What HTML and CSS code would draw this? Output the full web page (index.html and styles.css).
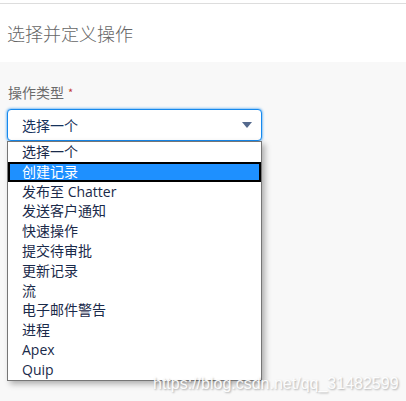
FILE: index.html
```html
<!DOCTYPE html>
<html lang="zh">
<head>
<meta charset="utf-8">
<link rel="stylesheet" href="styles.css">
</head>
<body>
<div class="header">
  <div class="header-inner">选择并定义操作</div>
</div>
<div class="form">
  <div class="label">操作类型<span class="req">*</span></div>
  <div class="select">
    <span class="select-value">选择一个</span>
    <svg class="arrow" width="10" height="6" viewBox="0 0 10 6"><path d="M0 0H10L5 6Z" fill="#54698d"/></svg>
  </div>
  <ul class="listbox">
    <li class="opt">选择一个</li>
    <li class="opt active">创建记录</li>
    <li class="opt">发布至 Chatter</li>
    <li class="opt">发送客户通知</li>
    <li class="opt">快速操作</li>
    <li class="opt">提交待审批</li>
    <li class="opt">更新记录</li>
    <li class="opt">流</li>
    <li class="opt">电子邮件警告</li>
    <li class="opt">进程</li>
    <li class="opt">Apex</li>
    <li class="opt">Quip</li>
  </ul>
</div>
<div class="watermark">https://blog.csdn.net/qq_31482599</div>
</body>
</html>
```
FILE: styles.css
```css
html, body {
  margin: 0;
  padding: 0;
}
body {
  background: #f8f8f8;
  font-family: "Open Sans", "Noto Sans CJK SC", sans-serif;
  height: 401px;
  overflow: hidden;
  position: relative;
}
.header {
  background: #fff;
  padding-top: 3px;
}
.header-inner {
  border-top: 1px solid #dddddd;
  height: 58px;
  padding-left: 7px;
  display: flex;
  align-items: center;
  font-family: "Noto Sans CJK SC", sans-serif;
  font-size: 18px;
  font-weight: 300;
  color: #666;
}
.form {
  padding: 21px 0 0 7px;
}
.label {
  font-family: "Noto Sans CJK SC", sans-serif;
  font-size: 14px;
  line-height: 19px;
  color: #6b6b6b;
  padding-left: 1px;
  margin-bottom: 7px;
}
.req {
  color: #c23934;
  font-size: 11px;
  margin-left: 4px;
  vertical-align: top;
}
.select {
  box-sizing: border-box;
  width: 255px;
  height: 32px;
  border: 1px solid #1589ee;
  border-radius: 4px;
  box-shadow: 0 0 3px #1589ee;
  background: #fff;
  display: flex;
  align-items: center;
  justify-content: space-between;
  padding: 0 9px 0 14px;
}
.select-value {
  font-family: "Noto Sans CJK SC", sans-serif;
  font-size: 14px;
  color: #16325c;
}
.arrow {
  display: block;
}
.listbox {
  list-style: none;
  margin: 0;
  padding: 0;
  box-sizing: border-box;
  width: 255px;
  background: #fff;
  border: 1px solid #767676;
  box-shadow: 3px 3px 6px rgba(0, 0, 0, 0.3);
}
.opt {
  box-sizing: border-box;
  height: 19.8px;
  line-height: 19.8px;
  padding-left: 14px;
  font-size: 14px;
  color: #1a2a4a;
  white-space: nowrap;
}
.opt.active {
  background: #1e90ff;
  color: #fff;
  box-shadow: inset 0 0 0 2px #000;
}
.watermark {
  position: absolute;
  left: 153px;
  top: 374px;
  font-family: "Liberation Sans", Arial, sans-serif;
  font-size: 16px;
  line-height: 20px;
  color: rgba(255, 255, 255, 0.95);
  text-shadow: 1px 1px 2px rgba(0, 0, 0, 0.3);
}
```
